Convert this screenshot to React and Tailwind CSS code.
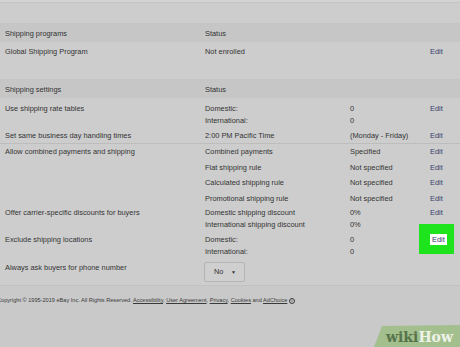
import React from "react";

// Shipping preferences table (eBay account settings)
const settings = [
  {
    label: "Use shipping rate tables",
    pad: "pt-[5px] pb-[2px]",
    line: "h-[11.5px]",
    lines: [
      { name: "Domestic:", value: "0", edit: true },
      { name: "International:", value: "0" },
    ],
  },
  {
    label: "Set same business day handling times",
    pad: "",
    line: "h-[15px]",
    border: true,
    lines: [{ name: "2:00 PM Pacific Time", value: "(Monday - Friday)", edit: true }],
  },
  {
    label: "Allow combined payments and shipping",
    pad: "",
    line: "h-[15.5px]",
    lines: [
      { name: "Combined payments", value: "Specified", edit: true },
      { name: "Flat shipping rule", value: "Not specified", edit: true },
      { name: "Calculated shipping rule", value: "Not specified", edit: true },
      { name: "Promotional shipping rule", value: "Not specified", edit: true },
    ],
  },
  {
    label: "Offer carrier-specific discounts for buyers",
    pad: "pt-[1px] pb-[3px]",
    line: "h-[12px]",
    lines: [
      { name: "Domestic shipping discount", value: "0%", edit: true },
      { name: "International shipping discount", value: "0%" },
    ],
  },
  {
    label: "Exclude shipping locations",
    pad: "",
    line: "h-[12px]",
    lines: [
      { name: "Domestic:", value: "0", edit: true, highlight: true },
      { name: "International:", value: "0" },
    ],
  },
];

function EditLink({ highlight }) {
  if (highlight) {
    return (
      <span className="relative">
        <span className="absolute left-[-11px] top-[-12px] w-[35px] h-[30px] bg-[#1de41d]" />
        <span className="relative bg-white px-[2px] py-[1px] text-[#2d3a6a]">Edit</span>
      </span>
    );
  }
  return <span className="text-[#33406b]">Edit</span>;
}

function HeaderBand({ title }) {
  return (
    <div className="flex items-center h-[19px] pt-[2px] bg-[#c6c6c6]">
      <div className="w-[205px] pl-[5px]">{title}</div>
      <div>Status</div>
    </div>
  );
}

export default function App() {
  return (
    <div
      className="w-[460px] h-[347px] overflow-hidden bg-[#cdcdcd] text-[#333333] text-[7.4px] leading-none relative"
      style={{ fontFamily: '"Liberation Sans", Arial, sans-serif' }}
    >
      <div className="h-[3px] bg-[#d3d3d3] border-b border-[#c3c3c3]" />
      <div className="h-[20px]" />

      <HeaderBand title="Shipping programs" />
      <div className="flex items-center h-[15px] pt-[4px]">
        <div className="w-[205px] pl-[5px]">Global Shipping Program</div>
        <div className="w-[225px]">Not enrolled</div>
        <EditLink />
      </div>

      <div className="h-[22px]" />

      <HeaderBand title="Shipping settings" />

      {settings.map((row) => (
        <div
          key={row.label}
          className={`flex ${row.pad} ${row.border ? "border-b border-[#bdbdbd]" : ""}`}
        >
          <div className={`w-[205px] pl-[5px] flex items-center ${row.line}`}>{row.label}</div>
          <div className="flex flex-col">
            {row.lines.map((l) => (
              <div key={l.name} className={`flex items-center ${row.line}`}>
                <div className="w-[145px]">{l.name}</div>
                <div className="w-[80px]">{l.value}</div>
                {l.edit && <EditLink highlight={l.highlight} />}
              </div>
            ))}
          </div>
        </div>
      ))}

      <div className="flex h-[28px] pt-[4px] border-b border-[#c2c2c2]">
        <div className="w-[204px] pl-[5px] h-[12px] flex items-center">
          Always ask buyers for phone number
        </div>
        <div className="w-[41px] h-[20px] border border-[#b5b5b5] rounded-[2px] bg-[#cfcfcf] flex items-center justify-between pl-[9px] pr-[8px]">
          <span>No</span>
          <span className="text-[5px]">▼</span>
        </div>
      </div>

      <div className="bg-[#c9c9c9] h-[62px]">
        <div className="pt-[12px] ml-[-3px] text-[5.6px] text-[#3a3a3a] whitespace-nowrap">
          Copyright © 1995-2019 eBay Inc. All Rights Reserved.{" "}
          <span className="underline">Accessibility</span>, <span className="underline">User Agreement</span>,{" "}
          <span className="underline">Privacy</span>, <span className="underline">Cookies</span> and{" "}
          <span className="underline">AdChoice</span>{" "}
          <span className="inline-flex items-center justify-center w-[6px] h-[6px] rounded-full border border-[#3a3a3a] text-[4px] font-bold">
            i
          </span>
        </div>
      </div>

      {/* wikiHow watermark */}
      <div className="absolute right-0 bottom-0 w-[86px] h-[23px]">
        <svg width="86" height="23" className="absolute inset-0">
          <polygon points="8,2 86,1 86,23 0,23" fill="#9cbd82" opacity="0.85" />
        </svg>
        <div
          className="relative flex items-end h-full pb-[3px] pl-[12px] text-[14px] font-bold leading-none"
          style={{ fontFamily: '"DejaVu Serif", "Liberation Serif", serif' }}
        >
          <span className="text-[#57734a]">wiki</span>
          <span className="text-[#eef3e8]">How</span>
        </div>
      </div>
    </div>
  );
}
